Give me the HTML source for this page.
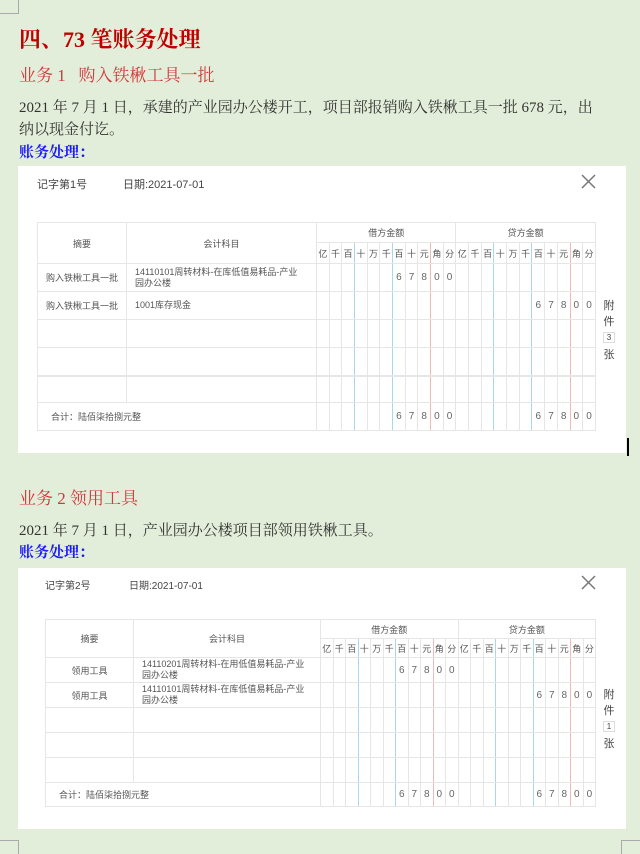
<!DOCTYPE html>
<html><head><meta charset="utf-8">
<style>
*{margin:0;padding:0;box-sizing:border-box}
body{width:640px;height:854px;background:#e2eed9;position:relative;overflow:hidden;font-family:"Liberation Sans","Noto Sans CJK SC",sans-serif}
.a{position:absolute;white-space:nowrap}
.h1{left:19px;top:23px;font-size:22px;font-weight:bold;color:#c00000;font-family:"Liberation Serif","Noto Serif CJK SC",serif}
.h2{font-size:17px;color:#d0383c;font-family:"Liberation Serif","Noto Serif CJK SC",serif}
.p{font-size:15px;color:#333;font-family:"Liberation Serif","Noto Serif CJK SC",serif}
.bl{font-size:15px;color:#1a1aff;font-weight:bold;font-family:"Liberation Serif","Noto Serif CJK SC",serif}
.box{position:absolute;left:18px;width:608px;background:#fff}
.t{position:absolute;font-size:11px;color:#444}
.x{position:absolute}
table{position:absolute;border-collapse:collapse;table-layout:fixed;font-size:9px;color:#555}
td{border:1px solid #e6e6e6;text-align:center;padding:0;overflow:hidden;white-space:nowrap}
td.b{border-right:1px solid #a9d6f0}
td.r{border-right:1px solid #f2b9bc}
td.l{text-align:left;padding-left:8px;padding-right:14px;white-space:normal;line-height:11px}
td.s{text-align:left;padding-left:13px}
.n td{font-size:10px;color:#666}
.att{position:absolute;font-size:11px;color:#444;text-align:center;width:16px}
.att span{display:block;border:1px solid #ddd;font-size:8px;line-height:9px;margin:3px 2px}
</style></head><body>
<div style="position:absolute;left:0;top:0;width:19px;height:14px;border-right:1px solid #aaa;border-bottom:1px solid #aaa"></div>
<div style="position:absolute;left:0;top:840px;width:19px;height:14px;border-right:1px solid #aaa;border-top:1px solid #aaa"></div>
<div style="position:absolute;left:621px;top:840px;width:19px;height:14px;border-left:1px solid #aaa;border-top:1px solid #aaa"></div>
<div class="a h1">四、73 笔账务处理</div>
<div class="a h2" style="left:19px;top:61px">业务 1&nbsp;&nbsp;&nbsp;购入铁楸工具一批</div>
<div class="a p" style="left:19px;top:96px">2021 年 7 月 1 日，承建的产业园办公楼开工，项目部报销购入铁楸工具一批 678 元，出</div>
<div class="a p" style="left:19px;top:118px">纳以现金付讫。</div>
<div class="a bl" style="left:19px;top:141px">账务处理：</div>

<div class="box" style="top:166px;height:287px"></div>
<div class="t" style="left:37px;top:176px">记字第1号</div>
<div class="t" style="left:123px;top:176px">日期:2021-07-01</div>
<svg class="x" style="left:581px;top:174px" width="15" height="15"><path d="M1 1L14 14M14 1L1 14" stroke="#777" stroke-width="1.5"/></svg>
<table style="left:37px;top:222px;width:558px">
<colgroup><col style="width:89px"><col style="width:190px"><col span="22" style="width:12.68px"></colgroup>
<tr style="height:20px"><td rowspan="2">摘要</td><td rowspan="2">会计科目</td><td colspan="11">借方金额</td><td colspan="11">贷方金额</td></tr>
<tr style="height:21px"><td>亿</td><td>千</td><td class=b>百</td><td>十</td><td>万</td><td class=b>千</td><td>百</td><td>十</td><td class=r>元</td><td>角</td><td>分</td><td>亿</td><td>千</td><td class=b>百</td><td>十</td><td>万</td><td class=b>千</td><td>百</td><td>十</td><td class=r>元</td><td>角</td><td>分</td></tr>
<tr class="n" style="height:28px"><td style="font-size:9px;color:#555">购入铁楸工具一批</td><td class="l" style="font-size:9px;color:#555">14110101周转材料-在库低值易耗品-产业园办公楼</td><td></td><td></td><td class=b></td><td></td><td></td><td class=b></td><td>6</td><td>7</td><td class=r>8</td><td>0</td><td>0</td><td></td><td></td><td class=b></td><td></td><td></td><td class=b></td><td></td><td></td><td class=r></td><td></td><td></td></tr>
<tr class="n" style="height:28px"><td style="font-size:9px;color:#555">购入铁楸工具一批</td><td class="l" style="font-size:9px;color:#555">1001库存现金</td><td></td><td></td><td class=b></td><td></td><td></td><td class=b></td><td></td><td></td><td class=r></td><td></td><td></td><td></td><td></td><td class=b></td><td></td><td></td><td class=b></td><td>6</td><td>7</td><td class=r>8</td><td>0</td><td>0</td></tr>
<tr style="height:28px"><td></td><td></td><td></td><td></td><td class=b></td><td></td><td></td><td class=b></td><td></td><td></td><td class=r></td><td></td><td></td><td></td><td></td><td class=b></td><td></td><td></td><td class=b></td><td></td><td></td><td class=r></td><td></td><td></td></tr>
<tr style="height:28px;border-bottom:2px solid #e6e6e6"><td></td><td></td><td></td><td></td><td class=b></td><td></td><td></td><td class=b></td><td></td><td></td><td class=r></td><td></td><td></td><td></td><td></td><td class=b></td><td></td><td></td><td class=b></td><td></td><td></td><td class=r></td><td></td><td></td></tr>
<tr style="height:27px"><td></td><td></td><td></td><td></td><td class=b></td><td></td><td></td><td class=b></td><td></td><td></td><td class=r></td><td></td><td></td><td></td><td></td><td class=b></td><td></td><td></td><td class=b></td><td></td><td></td><td class=r></td><td></td><td></td></tr>
<tr class="n" style="height:28px"><td colspan="2" class="s" style="font-size:9px;color:#555">合计：陆佰柒拾捌元整</td><td></td><td></td><td class=b></td><td></td><td></td><td class=b></td><td>6</td><td>7</td><td class=r>8</td><td>0</td><td>0</td><td></td><td></td><td class=b></td><td></td><td></td><td class=b></td><td>6</td><td>7</td><td class=r>8</td><td>0</td><td>0</td></tr>
</table>
<div class="att" style="left:601px;top:297px">附<br>件<span>3</span>张</div>
<div style="position:absolute;left:627px;top:438px;width:2px;height:18px;background:#000"></div>

<div class="a h2" style="left:19px;top:484px">业务 2 领用工具</div>
<div class="a p" style="left:19px;top:519px">2021 年 7 月 1 日，产业园办公楼项目部领用铁楸工具。</div>
<div class="a bl" style="left:19px;top:541px">账务处理：</div>

<div class="box" style="top:568px;height:261px"></div>
<div class="t" style="left:45px;top:577px;font-size:10px">记字第2号</div>
<div class="t" style="left:129px;top:577px;font-size:10px">日期:2021-07-01</div>
<svg class="x" style="left:581px;top:575px" width="15" height="15"><path d="M1 1L14 14M14 1L1 14" stroke="#777" stroke-width="1.5"/></svg>
<table style="left:45px;top:619px;width:550px">
<colgroup><col style="width:88px"><col style="width:187px"><col span="22" style="width:12.5px"></colgroup>
<tr style="height:19px"><td rowspan="2">摘要</td><td rowspan="2">会计科目</td><td colspan="11">借方金额</td><td colspan="11">贷方金额</td></tr>
<tr style="height:19px"><td>亿</td><td>千</td><td class=b>百</td><td>十</td><td>万</td><td class=b>千</td><td>百</td><td>十</td><td class=r>元</td><td>角</td><td>分</td><td>亿</td><td>千</td><td class=b>百</td><td>十</td><td>万</td><td class=b>千</td><td>百</td><td>十</td><td class=r>元</td><td>角</td><td>分</td></tr>
<tr class="n" style="height:25px"><td style="font-size:9px;color:#555">领用工具</td><td class="l" style="font-size:9px;color:#555">14110201周转材料-在用低值易耗品-产业园办公楼</td><td></td><td></td><td class=b></td><td></td><td></td><td class=b></td><td>6</td><td>7</td><td class=r>8</td><td>0</td><td>0</td><td></td><td></td><td class=b></td><td></td><td></td><td class=b></td><td></td><td></td><td class=r></td><td></td><td></td></tr>
<tr class="n" style="height:25px"><td style="font-size:9px;color:#555">领用工具</td><td class="l" style="font-size:9px;color:#555">14110101周转材料-在库低值易耗品-产业园办公楼</td><td></td><td></td><td class=b></td><td></td><td></td><td class=b></td><td></td><td></td><td class=r></td><td></td><td></td><td></td><td></td><td class=b></td><td></td><td></td><td class=b></td><td>6</td><td>7</td><td class=r>8</td><td>0</td><td>0</td></tr>
<tr style="height:25px"><td></td><td></td><td></td><td></td><td class=b></td><td></td><td></td><td class=b></td><td></td><td></td><td class=r></td><td></td><td></td><td></td><td></td><td class=b></td><td></td><td></td><td class=b></td><td></td><td></td><td class=r></td><td></td><td></td></tr>
<tr style="height:25px"><td></td><td></td><td></td><td></td><td class=b></td><td></td><td></td><td class=b></td><td></td><td></td><td class=r></td><td></td><td></td><td></td><td></td><td class=b></td><td></td><td></td><td class=b></td><td></td><td></td><td class=r></td><td></td><td></td></tr>
<tr style="height:25px"><td></td><td></td><td></td><td></td><td class=b></td><td></td><td></td><td class=b></td><td></td><td></td><td class=r></td><td></td><td></td><td></td><td></td><td class=b></td><td></td><td></td><td class=b></td><td></td><td></td><td class=r></td><td></td><td></td></tr>
<tr class="n" style="height:24px"><td colspan="2" class="s" style="font-size:9px;color:#555">合计：陆佰柒拾捌元整</td><td></td><td></td><td class=b></td><td></td><td></td><td class=b></td><td>6</td><td>7</td><td class=r>8</td><td>0</td><td>0</td><td></td><td></td><td class=b></td><td></td><td></td><td class=b></td><td>6</td><td>7</td><td class=r>8</td><td>0</td><td>0</td></tr>
</table>
<div class="att" style="left:601px;top:686px">附<br>件<span>1</span>张</div>
</body></html>
